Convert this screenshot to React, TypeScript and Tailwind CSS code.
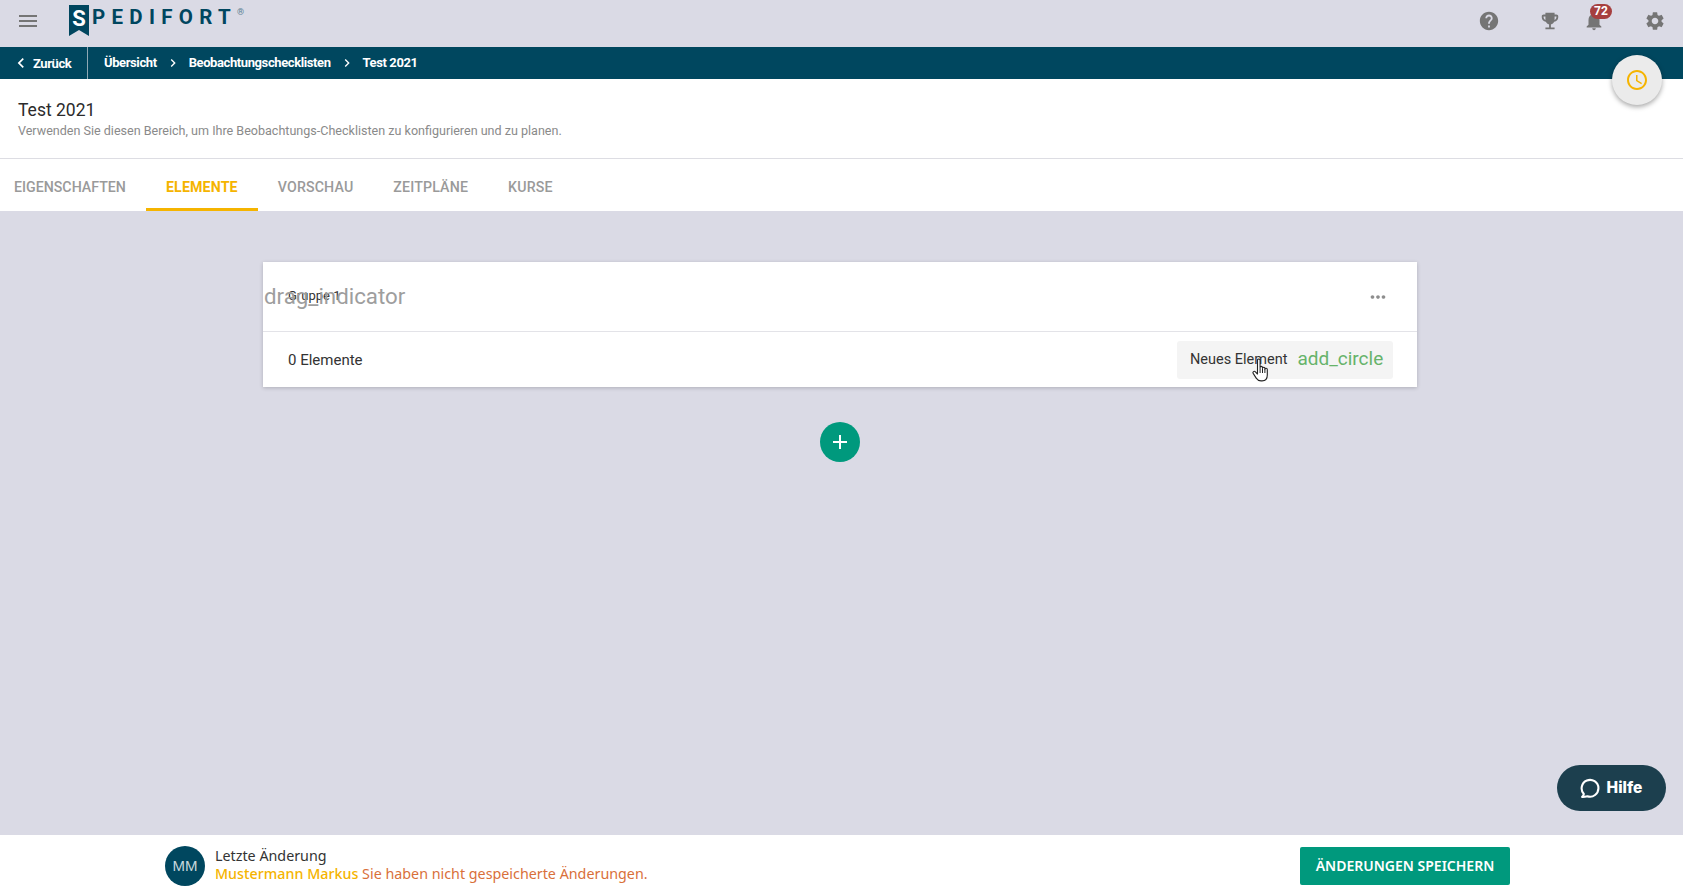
import React from "react";
import { MdHelp, MdEmojiEvents, MdNotifications, MdSettings, MdAccessTime, MdMenu, MdMoreHoriz, MdChevronLeft, MdChevronRight, MdAdd } from "react-icons/md";

const tabs = ["EIGENSCHAFTEN", "ELEMENTE", "VORSCHAU", "ZEITPLÄNE", "KURSE"];
const ui = "font-['Roboto',sans-serif]";
const noto = "font-['Noto_Sans',sans-serif]";

function HandCursor() {
  return (
    <svg viewBox="0 0 18 24" className="absolute left-[75px] top-[17px] h-[24px] w-[18px]">
      <path
        d="M5.5 2.2c0-1.6 2.6-1.6 2.6 0v7.2c0-1.4 2.4-1.4 2.4 0v.8c0-1.3 2.4-1.3 2.4 0v1c0-1.2 2.4-1.2 2.4.2v5.6c0 3.4-2 5.9-5.2 5.9H9c-2.4 0-3.6-1-4.8-2.8L1.2 15.4c-.9-1.5 1-2.8 2.2-1.6l2.1 2.2z"
        fill="#fff"
        stroke="#222"
        strokeWidth="1.1"
        strokeLinejoin="round"
      />
      <path d="M8.1 10v5M10.5 10.5V15M12.9 11.2V15" stroke="#222" strokeWidth="1" fill="none" />
    </svg>
  );
}

export default function App() {
  return (
    <div className={`relative flex h-[894px] w-full flex-col overflow-hidden bg-[#dadae5] ${ui}`}>
      <header className="flex h-[47px] shrink-0 items-start bg-[#dadae5]">
        <MdMenu className="ml-[16px] mt-[9px] text-[#757575]" size={24} />
        <div className="relative ml-[29px] mt-[5px] h-[31px] w-[20px] shrink-0">
          <svg viewBox="0 0 20 31" className="h-[31px] w-[20px]">
            <path d="M0 0h20v31l-10-6-10 6z" fill="#00465f" />
          </svg>
          <span className="absolute left-0 top-[1px] w-[20px] text-center text-[22px] font-bold leading-[26px] text-white">S</span>
        </div>
        <span className="ml-[3px] mt-[5px] text-[20.5px] font-bold leading-[24px] tracking-[6.3px] text-[#00465f]">PEDIFORT</span>
        <span className="mt-[7px] text-[9px] font-bold leading-[10px] text-[#5d8494]">®</span>
        <div className="ml-auto flex items-center pt-[10px] text-[#757575]">
          <MdHelp size={22} />
          <MdEmojiEvents size={22} className="ml-[39px]" />
          <div className="relative ml-[22px]">
            <MdNotifications size={22} />
            <span className="absolute -top-[6px] left-[7px] rounded-full bg-[#a63f3f] px-[4px] text-[12px] font-bold leading-[15px] text-white">72</span>
          </div>
          <MdSettings size={22} className="ml-[39px] mr-[17px]" />
        </div>
      </header>

      <nav className="flex h-[32px] shrink-0 items-center bg-[#00475f] text-[13px] font-bold tracking-[-0.4px] text-white">
        <div className="flex h-full w-[88px] items-center border-r border-[#8fa9b5] pl-[12px]">
          <MdChevronLeft size={20} className="-ml-[1px]" />
          <span className="ml-[2px] pt-[2px]">Zurück</span>
        </div>
        <span className="ml-[16px]">Übersicht</span>
        <MdChevronRight size={16} className="ml-[8px]" />
        <span className="ml-[8px]">Beobachtungschecklisten</span>
        <MdChevronRight size={16} className="ml-[8px]" />
        <span className="ml-[8px]">Test 2021</span>
      </nav>

      <section className="flex h-[80px] shrink-0 flex-col border-b border-[#dddde3] bg-white pl-[18px] pt-[20px]">
        <h1 className="text-[17.5px] font-normal leading-[22px] text-[#2b2b2b]">Test 2021</h1>
        <p className="mt-[2px] text-[12.55px] leading-[16px] text-[#8a8a8a]">
          Verwenden Sie diesen Bereich, um Ihre Beobachtungs-Checklisten zu konfigurieren und zu planen.
        </p>
      </section>

      <div className="flex h-[52px] shrink-0 bg-white text-[14.2px] font-medium text-[#9a9a9a]">
        {tabs.map((t, i) => (
          <div
            key={t}
            className={`flex h-full items-center border-b-[3px] pt-[8px] ${i === 0 ? "pl-[14px] pr-[20px]" : "px-[20px] tracking-[0.15px]"} ${
              t === "ELEMENTE" ? "border-[#f5b400] font-bold tracking-[0.3px] text-[#f5b400]" : "border-transparent"
            }`}
          >
            {t}
          </div>
        ))}
      </div>

      <main className="flex flex-1 flex-col items-center pr-[3px] pt-[51px]">
        <div className="w-[1154px] bg-white shadow-[0_1px_4px_rgba(0,0,0,0.2)]">
          <div className="relative flex h-[70px] items-center justify-between border-b border-[#e3e3e8] pl-[25px] pr-[28px]">
            <span className="-mt-[2px] text-[13px] text-[#333]">Gruppe 1</span>
            <span className="absolute left-[1px] top-[19px] text-[22.3px] leading-[30px] text-[#9e9e9e]">drag_indicator</span>
            <MdMoreHoriz size={22} className="text-[#8e8e8e]" />
          </div>
          <div className="flex h-[55px] items-center justify-between pl-[25px] pr-[24px]">
            <span className="mt-[1px] text-[15px] text-[#333]">0 Elemente</span>
            <div className="relative flex h-[38px] w-[216px] items-center rounded-[3px] bg-[#f4f4f4] pl-[13px] text-[14.5px] text-[#333]">
              <span>Neues Element</span>
              <span className="ml-[10px] text-[19px] text-[#66b36a]">add_circle</span>
              <HandCursor />
            </div>
          </div>
        </div>
        <button className="mt-[35px] flex h-[40px] w-[40px] items-center justify-center rounded-full bg-[#00997d] text-white">
          <MdAdd size={24} />
        </button>
      </main>

      <footer className={`flex h-[59px] shrink-0 items-center bg-white pl-[165px] pr-[173px] ${noto}`}>
        <div className="mt-[3px] flex h-[40px] w-[40px] items-center justify-center rounded-full bg-[#00475f] font-['Liberation_Sans',sans-serif] text-[15px] text-[#c6d6dc]">MM</div>
        <div className="ml-[10px] text-[14.3px] leading-[18px]">
          <div className="text-[#333]">Letzte Änderung</div>
          <div className="text-[#d9703a]">
            <span className="font-medium text-[#f5b400]">Mustermann Markus</span> Sie haben nicht gespeicherte Änderungen.
          </div>
        </div>
        <button className="ml-auto mt-[2px] flex h-[38px] w-[210px] items-center justify-center rounded-[2px] bg-[#00997d] text-[14px] font-semibold text-white">
          ÄNDERUNGEN SPEICHERN
        </button>
      </footer>

      <div className="absolute left-[1612px] top-[55px] flex h-[50px] w-[50px] items-center justify-center rounded-full bg-[#ebebeb] shadow-[0_2px_5px_rgba(0,0,0,0.35)]">
        <MdAccessTime size={24} className="text-[#f5b400]" />
      </div>

      <div className="absolute left-[1557px] top-[765px] flex h-[46px] w-[109px] items-center justify-center gap-[7px] rounded-full bg-[#1c3f4e] pr-[2px] font-['Inter',sans-serif] text-[15.5px] font-extrabold text-white">
        <svg viewBox="0 0 20 20" className="h-[21px] w-[21px]" fill="none" stroke="#fff" strokeWidth="2" strokeLinecap="round" strokeLinejoin="round">
          <path d="M4.6 15.2A8 8 0 1 1 8 17.4c-1.6.4-3.6.7-5 .6.9-.7 1.5-1.7 1.6-2.8z" />
        </svg>
        Hilfe
      </div>
    </div>
  );
}
